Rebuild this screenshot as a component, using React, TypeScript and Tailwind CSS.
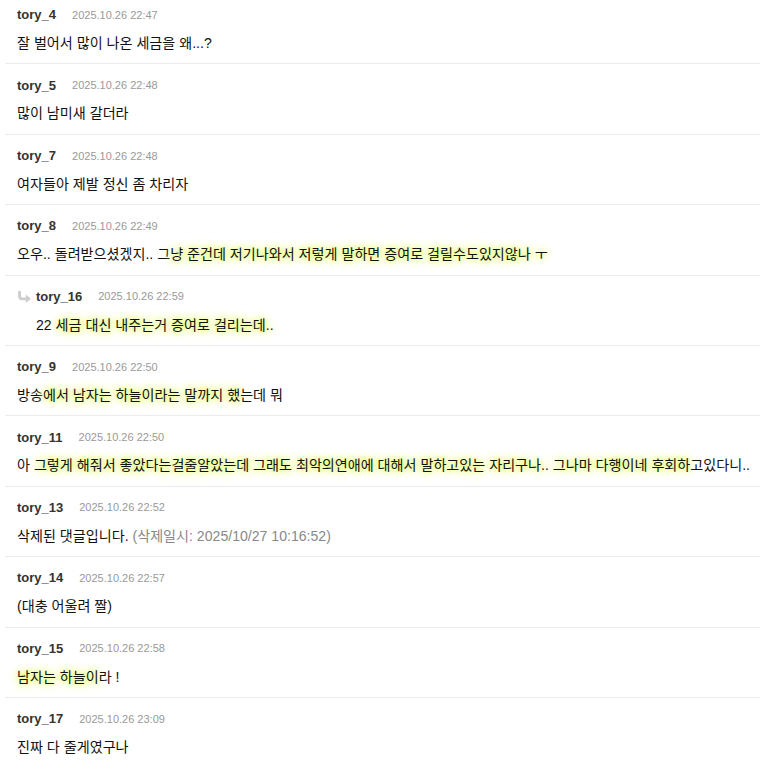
import React from 'react';

type Part = { t: string; hl?: boolean; muted?: boolean };

interface Comment {
  id: number;
  name: string;
  date: string;
  reply?: boolean;
  parts: Part[];
}

const comments: Comment[] = [
  { id: 1, name: 'tory_4', date: '2025.10.26 22:47', parts: [{ t: '잘 벌어서 많이 나온 세금을 왜...?' }] },
  { id: 2, name: 'tory_5', date: '2025.10.26 22:48', parts: [{ t: '많이 남미새 갈더라' }] },
  { id: 3, name: 'tory_7', date: '2025.10.26 22:48', parts: [{ t: '여자들아 제발 정신 좀 차리자' }] },
  {
    id: 4,
    name: 'tory_8',
    date: '2025.10.26 22:49',
    parts: [
      { t: '오우.. 돌려받으셨겠지.. 그' },
      { t: '냥 준건데 저기나와서 저렇게 말하면 증여로 걸릴수도있지않나 ㅜ', hl: true },
    ],
  },
  {
    id: 5,
    name: 'tory_16',
    date: '2025.10.26 22:59',
    reply: true,
    parts: [{ t: '22 ' }, { t: '세금 대신 내주는거 증여로 걸리는데..', hl: true }],
  },
  {
    id: 6,
    name: 'tory_9',
    date: '2025.10.26 22:50',
    parts: [{ t: '방송' }, { t: '에서 남자는 하늘이라는 말까지 했', hl: true }, { t: '는데 뭐' }],
  },
  {
    id: 7,
    name: 'tory_11',
    date: '2025.10.26 22:50',
    parts: [
      { t: '아 ' },
      {
        t: '그렇게 해줘서 좋았다는걸줄알았는데 그래도 최악의연애에 대해서 말하고있는 자리구나.. 그나마 다행이네 후회하',
        hl: true,
      },
      { t: '고있다니..' },
    ],
  },
  {
    id: 8,
    name: 'tory_13',
    date: '2025.10.26 22:52',
    parts: [{ t: '삭제된 댓글입니다. ' }, { t: '(삭제일시: 2025/10/27 10:16:52)', muted: true }],
  },
  { id: 9, name: 'tory_14', date: '2025.10.26 22:57', parts: [{ t: '(대충 어울려 짤)' }] },
  {
    id: 10,
    name: 'tory_15',
    date: '2025.10.26 22:58',
    parts: [{ t: '남자는 하늘이', hl: true }, { t: '라 !' }],
  },
  { id: 11, name: 'tory_17', date: '2025.10.26 23:09', parts: [{ t: '진짜 다 줄게였구나' }] },
];

// 답글 표시 화살표
const ReplyArrow = () => (
  <svg width="15" height="13" viewBox="0 0 15 13" className="mr-[4px] shrink-0">
    <path d="M2.5 1 V6 Q2.5 8.8 5.3 8.8 H9.5" fill="none" stroke="#cdcdcd" strokeWidth="2.8" />
    <path d="M8.8 4.6 L14 8.8 L8.8 13 Z" fill="#cdcdcd" />
  </svg>
);

const CommentRow = ({ c, first }: { c: Comment; first: boolean }) => (
  <li
    className={`border-b border-[#ebebeb] pl-3 pr-1 pb-[10.4px] ${first ? 'pt-[7px]' : 'pt-[13px]'}`}
  >
    <div className="flex items-center h-4">
      {c.reply && <ReplyArrow />}
      <span className="text-[13px] font-bold text-[#333]">{c.name}</span>
      <span className="ml-4 text-[11px] text-[#999]">{c.date}</span>
    </div>
    <p
      className={`mt-[10px] h-5 leading-5 text-[14.1px] text-[#111] whitespace-nowrap ${c.reply ? 'pl-[19px]' : ''}`}
    >
      {c.parts.map((p, i) => (
        <span
          key={i}
          className={
            p.hl
              ? '[text-shadow:0_0_10px_#dcff4a,0_0_8px_#e4ff70,0_0_4px_#f0ffa8]'
              : p.muted
              ? 'text-[#888]'
              : ''
          }
        >
          {p.t}
        </span>
      ))}
    </p>
  </li>
);

export default function App() {
  return (
    <div
      className="w-[760px] h-[767px] overflow-hidden bg-white"
      style={{ fontFamily: '"Liberation Sans", "Noto Sans CJK KR", sans-serif' }}
    >
      <ul className="ml-[5px]">
        {comments.map((c, i) => (
          <CommentRow key={c.id} c={c} first={i === 0} />
        ))}
      </ul>
    </div>
  );
}
